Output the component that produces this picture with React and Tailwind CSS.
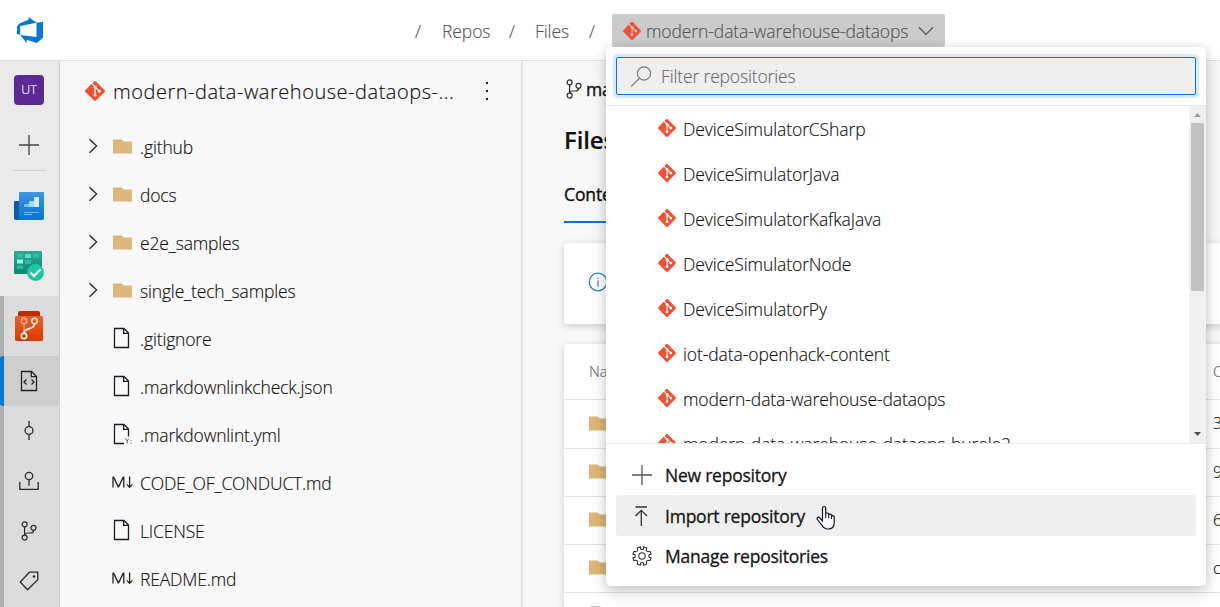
import React from "react";
import { SiGit } from "react-icons/si";

const treeFolders = [".github", "docs", "e2e_samples", "single_tech_samples"];

const treeFiles = [
  { name: ".gitignore", kind: "file" },
  { name: ".markdownlinkcheck.json", kind: "file" },
  { name: ".markdownlint.yml", kind: "yml" },
  { name: "CODE_OF_CONDUCT.md", kind: "md" },
  { name: "LICENSE", kind: "file" },
  { name: "README.md", kind: "md" },
];

const repos = [
  "DeviceSimulatorCSharp",
  "DeviceSimulatorJava",
  "DeviceSimulatorKafkaJava",
  "DeviceSimulatorNode",
  "DeviceSimulatorPy",
  "iot-data-openhack-content",
  "modern-data-warehouse-dataops",
  "modern-data-warehouse-dataops-burele2",
];

const commits = ["3", "9", "6", "c"];

function Git({ className }) {
  return <SiGit className={`shrink-0 text-[#f05133] ${className}`} />;
}

function Folder() {
  return (
    <svg width="19" height="15" viewBox="0 0 19 15" className="shrink-0">
      <path d="M0 0.6h8.6l2 2H19V14.500H0z" fill="#dcb67a" />
    </svg>
  );
}

function FileIcon({ yml }) {
  return (
    <svg width="21" height="22" viewBox="0 0 21 22" fill="none" stroke="#1b1b24" strokeWidth="1.3" className="shrink-0">
      {yml ? <path d="M12 20.500H2.500V1.500h9.500l4.500 4.500v7.500" /> : <path d="M2.500 1.500h9.500l4.500 4.500v14.500H2.500z" />}
      <path d="M11.700 1.700v4.700h4.700" />
      {yml && <path d="M13.500 15.500l1.700 2.400 1.700-2.400M15.200 17.900v2.600M19 17v1M19 19.600v1" stroke="#555" strokeWidth="0.9" />}
    </svg>
  );
}

function Markdown() {
  return (
    <svg width="21" height="14" viewBox="0 0 21 14" fill="none" stroke="#222" strokeWidth="1.3" className="shrink-0">
      <path d="M1 12.600V2.200h.6l4.600 9.600h.4l4.600-9.600h.6v10.400" />
      <path d="M17.600 1.400v10.800M14.800 9.400l2.800 3 2.800-3" />
    </svg>
  );
}

function Branch() {
  return (
    <svg width="16" height="20" viewBox="0 0 16 20" fill="none" stroke="#2b2b2b" strokeWidth="1.2" className="shrink-0">
      <circle cx="3.600" cy="3.400" r="2.500" />
      <circle cx="3.600" cy="16.600" r="2.500" />
      <circle cx="12.500" cy="6.800" r="2.500" />
      <path d="M3.600 6v8M12.500 9.400c0 2-1.200 2.600-3 2.600H6.800c-1.600 0-3 .6-3 2" />
    </svg>
  );
}

function Plus({ color }) {
  return (
    <svg width="20" height="20" viewBox="0 0 20 20" fill="none" stroke={color} strokeWidth="1.3">
      <path d="M0 10h20M10 0v20" />
    </svg>
  );
}

function Sidebar() {
  return (
    <nav className="flex w-[60px] shrink-0 flex-col border-r border-[#cfcfcf] bg-[#eaeaea]">
      <div className="flex h-[235px] flex-col items-center pt-3.5 pr-px">
        <div className="flex h-[30px] w-[30px] items-center justify-center rounded-[4px] bg-[#5c2893] text-[12.5px] tracking-normal text-white">UT</div>
        <div className="mt-[30px]"><Plus color="#444" /></div>
        <div className="mt-[15px] h-px w-[33px] bg-[#cdcdcd]" />
        <svg width="30" height="28" viewBox="0 0 30 28" className="mt-[21px] shrink-0">
          <defs>
            <linearGradient id="boards" x1="0" y1="0" x2="0" y2="1">
              <stop offset="0" stopColor="#3d96e2" />
              <stop offset="1" stopColor="#0672d2" />
            </linearGradient>
          </defs>
          <path d="M0 10a1 1 0 0 1 1-1h5v19H2a2 2 0 0 1-2-2z" fill="#0f5aa5" />
          <path d="M5 1a1 1 0 0 1 1-1h23a1 1 0 0 1 1 1v25a2 2 0 0 1-2 2H3.500C5 27.500 5 26.500 5 25z" fill="url(#boards)" />
          <path d="M10 12h5v3h-5z" fill="#7cc0f8" />
          <path d="M15 9h5v6h-5z" fill="#a4d5fb" />
          <path d="M20 5h5v10h-5z" fill="#d3ecff" />
          <path d="M10 20.500h15M10 22.500h8" stroke="#7dbbf0" strokeWidth="1" />
        </svg>
        <svg width="30" height="30" viewBox="0 0 30 30" className="mt-[31px] shrink-0">
          <defs>
            <linearGradient id="tests" x1="0" y1="0" x2="0" y2="1">
              <stop offset="0" stopColor="#35a892" />
              <stop offset="1" stopColor="#0d8672" />
            </linearGradient>
          </defs>
          <rect width="28" height="23" rx="1" fill="url(#tests)" />
          <path d="M3 3h6v4H3zM19 3h6v4h-6zM11 9h6v4h-6zM3 14.500h6v3.500H3z" fill="#25bea3" />
          <path d="M11 3h6v4h-6z" fill="#54dec5" />
          <path d="M3 8.500h6v4H3z" fill="#9ff8e3" />
          <circle cx="21.500" cy="21.500" r="8.500" fill="#1fc4a7" />
          <path d="M16.500 21.500l3.600 3.600 6.400-6.800" fill="none" stroke="#fff" strokeWidth="2.300" />
        </svg>
      </div>
      <div className="flex flex-1 flex-col border-l-4 border-[#b0b0b0] bg-[#dcdcdc]">
        <div className="flex h-[60px] items-center justify-center pr-[5px]">
          <svg width="28" height="30" viewBox="0 0 28 30">
            <defs>
              <linearGradient id="repos" x1="0" y1="0" x2="0" y2="1">
                <stop offset="0" stopColor="#e8602f" />
                <stop offset="1" stopColor="#d83b01" />
              </linearGradient>
            </defs>
            <path d="M5 0h18a2 2 0 0 1 2 2v4H3V2a2 2 0 0 1 2-2z" fill="#b72f03" />
            <rect y="5" width="28" height="25" rx="1.500" fill="url(#repos)" />
            <g fill="none" strokeWidth="1.500">
              <path d="M9 13v9" stroke="#f39a75" />
              <circle cx="9" cy="10" r="2.700" stroke="#f6ab8c" />
              <path d="M19.500 13c0 6-10.300 3.500-10.700 9" stroke="#ffe3d8" strokeWidth="1.900" />
              <circle cx="19.500" cy="10" r="2.700" stroke="#ffe3d8" />
              <circle cx="9" cy="25" r="2.700" stroke="#fff" />
            </g>
          </svg>
        </div>
        <div className="-ml-1 flex h-[50px] items-center justify-center rounded-[3px] border-l-4 border-[#0078d4] bg-[#cecece] pr-[5px]">
          <svg width="18" height="22" viewBox="0 0 18 22" fill="none" stroke="#22222a" strokeWidth="1.300">
            <path d="M1.500 1.500h10l5 5v14h-15z" />
            <path d="M11.300 1.800v4.900h5M6.500 9.500L4 12l2.500 2.500M11.500 9.500L14 12l-2.500 2.500" />
          </svg>
        </div>
        <div className="flex h-[50px] items-center justify-center pr-[5px]">
          <svg width="20" height="20" viewBox="0 0 20 20" fill="none" stroke="#2b2b2b" strokeWidth="1.300">
            <circle cx="10" cy="9.500" r="3.900" />
            <path d="M10 0v5.500M10 13.500v5.500" />
          </svg>
        </div>
        <div className="flex h-[50px] items-center justify-center pr-[5px]">
          <svg width="20" height="20" viewBox="0 0 20 20" fill="none" stroke="#2b2b2b" strokeWidth="1.300">
            <circle cx="10" cy="5" r="3.700" />
            <path d="M10 8.700v6M0.800 11v7.400h18.400V11" />
          </svg>
        </div>
        <div className="flex h-[50px] items-center justify-center pr-[5px]"><Branch /></div>
        <div className="flex h-[50px] items-center justify-center pr-[5px]">
          <svg width="20" height="20" viewBox="0 0 20 20" fill="none" stroke="#2b2b2b" strokeWidth="1.300">
            <path d="M10.500 1.200h8.300v7.500L8.500 18.800 1.200 11z" />
            <circle cx="15" cy="5.500" r="0.700" fill="#2b2b2b" />
          </svg>
        </div>
      </div>
    </nav>
  );
}

function Tree() {
  return (
    <section className="flex w-[463px] shrink-0 flex-col border-r-2 border-[#e4e4e4]">
      <div className="flex h-[62px] items-center pl-[25px]">
        <Git className="mb-0.5 h-5 w-5" />
        <span className="ml-2 w-[350px] text-[20px] tracking-[0.53px] whitespace-nowrap">modern-data-warehouse-dataops-...</span>
        <svg width="4" height="20" viewBox="0 0 4 20" className="mb-0.5 ml-[22px]" fill="#222">
          <circle cx="2" cy="2" r="1.200" />
          <circle cx="2" cy="10" r="1.200" />
          <circle cx="2" cy="18" r="1.200" />
        </svg>
      </div>
      {treeFolders.map((name) => (
        <div key={name} className="flex h-12 shrink-0 items-center pl-7 pb-0.5">
          <svg width="10" height="16" viewBox="0 0 10 16" fill="none" stroke="#25252e" strokeWidth="1.300" className="mr-[15px]">
            <path d="M1.500 1.200L8.600 8l-7.100 6.800" />
          </svg>
          <Folder />
          <span className="ml-2 pt-px tracking-[-0.17px]">{name}</span>
        </div>
      ))}
      {treeFiles.map((f) => (
        <div key={f.name} className="flex h-12 shrink-0 items-center pl-[52px] pb-0.5">
          <div className="flex w-[20px] items-center">{f.kind === "md" ? <Markdown /> : <FileIcon yml={f.kind === "yml"} />}</div>
          <span className="ml-2 pt-px tracking-[-0.17px]">{f.name}</span>
        </div>
      ))}
    </section>
  );
}

function Content() {
  return (
    <main className="min-w-0 flex-1 overflow-hidden pl-[41px]">
      <div className="flex h-[55px] items-center gap-1 pl-0.5">
        <Branch />
        <span className="font-normal [-webkit-text-stroke:0.4px_#222]">main</span>
      </div>
      <div className="flex h-12 items-center text-[24px] font-semibold">Files</div>
      <div className="mt-2 flex h-[51px] w-[78px] items-center border-b-2 border-[#0078d4] pb-[5px] font-normal [-webkit-text-stroke:0.4px_#111]">Contents</div>
      <div className="mt-5 flex h-[81px] w-[680px] items-center rounded-[4px] bg-white pb-1 pl-6 shadow-[0_2px_8px_rgba(0,0,0,0.18)]">
        <svg width="20" height="20" viewBox="0 0 20 20" fill="none" stroke="#2b7cd3" strokeWidth="1.200">
          <circle cx="10" cy="10" r="8.800" />
          <path d="M10 8.500v6M10 5.500v1.400" />
        </svg>
      </div>
      <div className="mt-5 w-[700px] rounded-[4px] bg-white shadow-[0_2px_8px_rgba(0,0,0,0.18)]">
        <div className="flex h-14 items-center border-b border-[#e4e4e4] pb-px pl-[25px] text-[15px] text-[#6b6b6b]">
          <span className="w-[624px] shrink-0">Name</span>
          <span>Commits</span>
        </div>
        {commits.map((c) => (
          <div key={c} className="flex h-12 items-center border-b border-[#e4e4e4] pb-0.5 pl-[25px] text-[16px] nth-2:h-[49px]">
            <Folder />
            <span className="ml-[605px]">{c}</span>
          </div>
        ))}
        <div className="flex h-12 pt-[13px] pl-6"><FileIcon /></div>
      </div>
    </main>
  );
}

function RepoMenu() {
  return (
    <div className="absolute top-[47px] left-[606px] flex h-[539px] w-[600px] flex-col rounded-[5px] bg-white shadow-[0_6px_16px_rgba(0,0,0,0.2),0_0_8px_rgba(0,0,0,0.08)]">
      <div className="flex h-[59px] shrink-0 items-start border-b border-[#eaeaea] px-2.5 pt-2.5">
        <div className="flex h-[38px] w-full items-center rounded-[2px] border border-[#0078d4] bg-[#efefef] pl-3.5 text-[#6c6c6c] shadow-[0_0_0_3px_#d7e8f8]">
          <svg width="21" height="21" viewBox="0 0 21 21" fill="none" stroke="#777" strokeWidth="1.200">
            <circle cx="13" cy="7.500" r="6.600" />
            <path d="M8.300 12.300L0.300 20.300" />
          </svg>
          <span className="ml-[9px] tracking-[-0.15px]">Filter repositories</span>
        </div>
      </div>
      <div className="flex h-[337px] shrink-0 overflow-hidden">
        <ul className="min-w-0 flex-1">
          {repos.map((r) => (
            <li key={r} className="flex h-[45px] items-center pl-[52px]">
              <Git className="mb-0.5 h-[18px] w-[18px]" />
              <span className="ml-[7px] pt-px whitespace-nowrap">{r}</span>
            </li>
          ))}
        </ul>
        <div className="flex w-[17px] flex-col items-center bg-[#f0f0f0]">
          <svg width="17" height="17" viewBox="0 0 17 17"><path d="M5 11h7L8.500 7z" fill="#a0a0a0" /></svg>
          <div className="h-[168px] w-[13px] bg-[#c1c1c1]" />
          <div className="flex-1" />
          <svg width="17" height="17" viewBox="0 0 17 17"><path d="M5 6h7L8.500 10z" fill="#505050" /></svg>
        </div>
      </div>
      <div className="border-t border-[#eaeaea] px-2.5 pt-[10px] font-normal tracking-[-0.23px] [-webkit-text-stroke:0.3px_#222]">
        <div className="flex h-[41px] items-center pl-4"><Plus color="#555" /><span className="ml-[13px] pt-px">New repository</span></div>
        <div className="flex h-[41px] items-center rounded-[3px] bg-[#efefef] pl-4">
          <svg width="20" height="20" viewBox="0 0 20 20" fill="none" stroke="#333" strokeWidth="1.300">
            <path d="M3.500 1h11.500M9.300 20V4.500M3.500 10l5.800-5.700L15 10" />
          </svg>
          <span className="ml-[13px] pt-px">Import repository</span>
          <svg width="20" height="26" viewBox="0 0 20 26" className="mt-1 ml-[11px]">
            <path d="M6.500 16V3.200c0-2.300 3.200-2.300 3.200 0v6c0-1.600 3-1.600 3 0v.8c.2-1.400 2.800-1.300 2.800.4v.9c.4-1.200 2.700-.8 2.700.8v5.600c0 4-2.600 6.300-6.200 6.300-3 0-4.600-1-5.800-3.400L1.400 14.500c-1-1.800 1-3 2.300-1.700z" fill="#fff" stroke="#10102a" strokeWidth="1.200" />
            <path d="M9.700 9v4M12.700 10v3M15.500 11v3" stroke="#10102a" strokeWidth="1.100" />
          </svg>
        </div>
        <div className="flex h-[41px] items-center pb-0.5 pl-4">
          <svg width="20" height="20" viewBox="0 0 20 20" fill="none" stroke="#333" strokeWidth="1.100" strokeLinejoin="round">
            <circle cx="10" cy="10" r="3.200" />
            <path d="M8.300 0.800l.3 2.200c.9.600 1.900.6 2.800 0l.3-2.200 3 1.200-.5 2.100c.3.900.9 1.500 1.700 1.700l2-.5 1.300 3-2 .3c-.6.900-.6 1.900 0 2.800l2 .3-1.300 3-2-.5c-.8.200-1.400.8-1.700 1.700l.5 2.100-3 1.200-.3-2.200c-.9-.6-1.900-.6-2.800 0l-.3 2.200-3-1.200.5-2.100c-.3-.9-.9-1.500-1.700-1.700l-2 .5-1.300-3 2-.3c.6-.9.6-1.900 0-2.800l-2-.3 1.300-3 2 .5c.8-.2 1.400-.8 1.700-1.700L5.300 2z" />
          </svg>
          <span className="ml-[13px]">Manage repositories</span>
        </div>
      </div>
    </div>
  );
}

export default function App() {
  return (
    <div className="relative flex h-[607px] w-[1220px] flex-col overflow-hidden bg-[#f8f8f8] font-['Open_Sans','Noto_Sans',sans-serif] text-[17.5px] leading-6 font-light tracking-[-0.1px] text-[#111] [-webkit-text-stroke:0.15px_currentColor]">
      <header className="flex h-[61px] shrink-0 items-center border-b border-[#e0e0e0] bg-white pt-px pl-[17px] text-[#555]">
        <svg width="26" height="26" viewBox="0 0 24 24" fill="#0078d7" className="mb-0.5">
          <path d="M0 8.877L2.247 5.910l8.405-3.416V.022l7.370 5.393L2.966 8.338v8.225L0 15.707zm24-4.450v14.651l-5.753 4.900-9.303-3.057v3.056l-5.978-7.416 15.057 1.798V5.415z" />
        </svg>
        <span className="ml-[372px] w-[27px]">/</span>
        <span className="w-[67px]">Repos</span>
        <span className="w-[26px]">/</span>
        <span className="w-[54px]">Files</span>
        <span className="w-[23px]">/</span>
        <div className="flex h-[33px] w-[333px] items-center rounded-[2px] bg-[#cbcbcb] pl-[11px]">
          <Git className="h-[18px] w-[18px]" />
          <span className="ml-[5px] w-[272px] whitespace-nowrap">modern-data-warehouse-dataops</span>
          <svg width="16" height="10" viewBox="0 0 16 10" fill="none" stroke="#555" strokeWidth="1.300">
            <path d="M1 1.200L8 8.400l7-7.200" />
          </svg>
        </div>
      </header>
      <div className="flex min-h-0 flex-1">
        <Sidebar />
        <Tree />
        <Content />
      </div>
      <RepoMenu />
    </div>
  );
}
